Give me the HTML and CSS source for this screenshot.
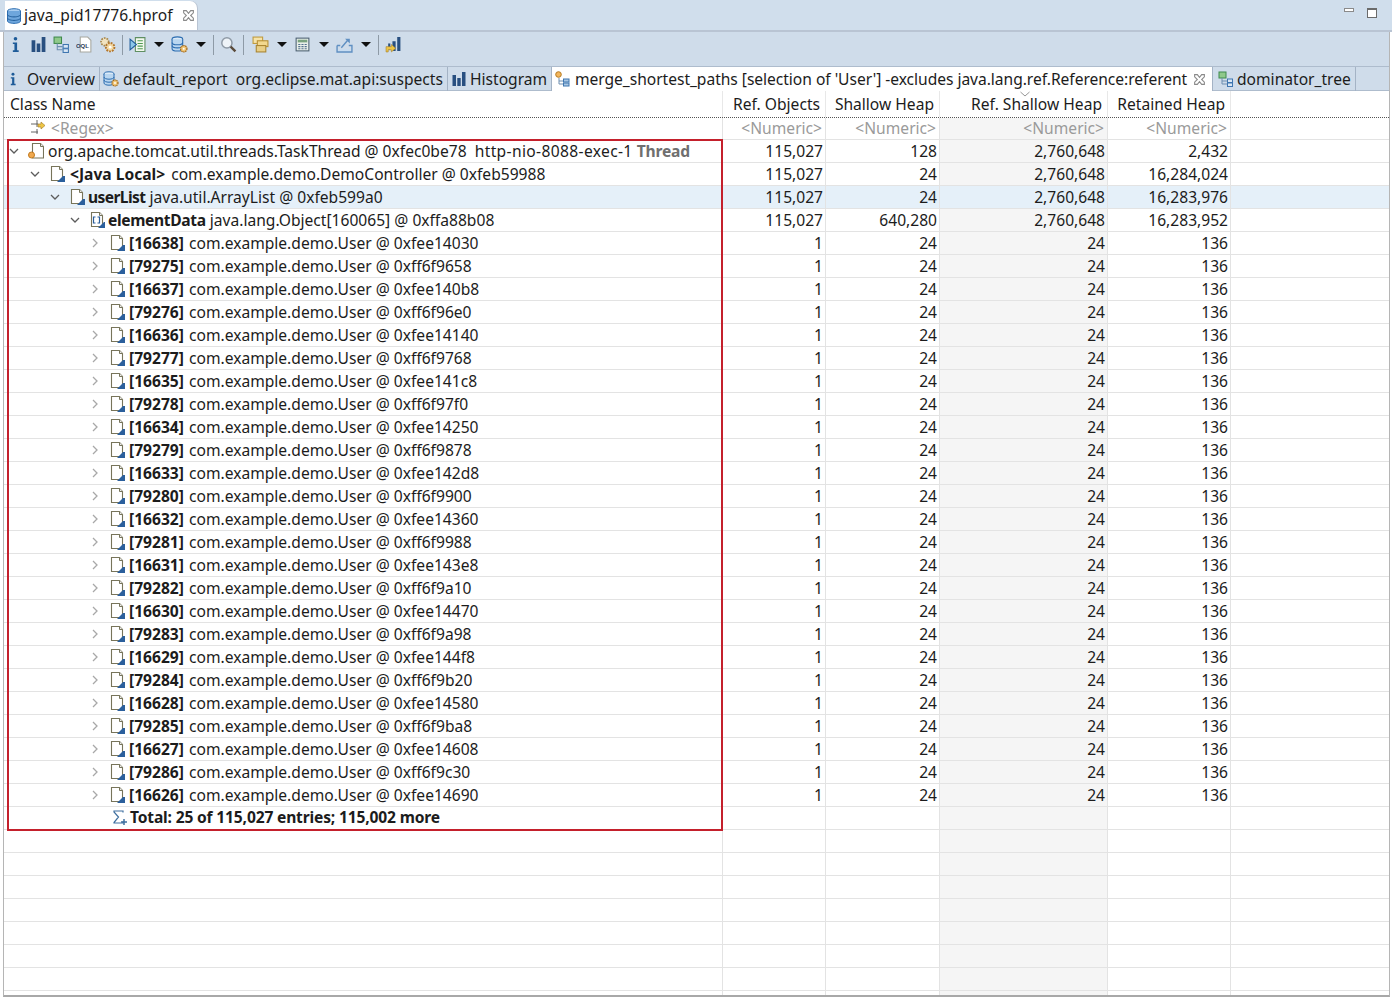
FILE: index.html
```html
<!DOCTYPE html>
<html lang="en">
<head>
<meta charset="utf-8">
<title>java_pid17776.hprof</title>
<link rel="stylesheet" href="styles.css">
</head>
<body>
<svg class="defs" width="0" height="0" aria-hidden="true">
  <defs>
    <symbol id="i-info" viewBox="0 0 16 16"><circle cx="8" cy="2.600" r="1.700" fill="#1f5c99"/><path d="M5.500 6h4v7.500h1.500V15H5.500v-1.500H7V7.500H5.500z" fill="#1f5c99"/></symbol>
    <symbol id="i-hist" viewBox="0 0 16 16"><path d="M1.500 4h3.500v11H1.500zM6.300 7h3.400v8H6.300zM11 1h3.500v14H11z" fill="#284f80"/></symbol>
    <symbol id="i-tree" viewBox="0 0 16 16"><rect x="1" y="1" width="7" height="6" fill="#8fc98a" stroke="#3f8a4c"/><path d="M4 7v6h5M4 10h5" fill="none" stroke="#6f8fb0"/><rect x="9.500" y="8" width="5" height="3.500" fill="#dbe8f5" stroke="#3f76b0"/><rect x="9.500" y="12" width="5" height="3.500" fill="#dbe8f5" stroke="#3f76b0"/></symbol>
    <symbol id="i-oql" viewBox="0 0 16 16"><path d="M4 1h7l3 3v11H4z" fill="#fff" stroke="#a8a8a0"/><text x="0" y="11.500" class="oql-text">OQL</text></symbol>
    <symbol id="i-gears" viewBox="0 0 16 16"><circle cx="5.500" cy="5.500" r="3.600" fill="#f1e3c0" stroke="#a5854a" stroke-width="1.600" stroke-dasharray="1.600 1"/><circle cx="10.500" cy="10.500" r="4" fill="#f3d9a4" stroke="#b3762e" stroke-width="1.800" stroke-dasharray="1.700 1"/><circle cx="10.500" cy="10.500" r="1.300" fill="#fff"/></symbol>
    <symbol id="i-list" viewBox="0 0 16 16"><path d="M6 1.500h9v13H6z" fill="#f2f8ee" stroke="#5f8f62"/><path d="M8 4.500h5M8 7h5M8 9.500h5M8 12h5" stroke="#4f9a52"/><path d="M1 3l6 5-6 5z" fill="#8cc7e8" stroke="#1f5c99"/></symbol>
    <symbol id="i-db" viewBox="0 0 16 16"><ellipse cx="6" cy="3" rx="5" ry="2.200" fill="#dbeaf8" stroke="#2c6db0"/><path d="M1 3v9c0 1.300 2.200 2.200 5 2.200s5-.9 5-2.200V3" fill="#b9d6f0" stroke="#2c6db0"/><path d="M1 6c0 1.300 2.200 2.200 5 2.200s5-.9 5-2.200M1 9c0 1.300 2.200 2.200 5 2.200s5-.9 5-2.200" fill="none" stroke="#2c6db0"/><circle cx="12" cy="12" r="3" fill="#f2c777" stroke="#a46a1c" stroke-width="1.200" stroke-dasharray="1.300 .6"/><circle cx="12" cy="12" r=".9" fill="#fff"/></symbol>
    <symbol id="i-dbplain" viewBox="0 0 16 16"><ellipse cx="8" cy="3" rx="6.500" ry="2.300" fill="#a9cdf0" stroke="#2c6db0"/><path d="M1.500 3v10c0 1.300 2.900 2.400 6.500 2.400s6.500-1.100 6.500-2.400V3" fill="#6ea6dc" stroke="#2c6db0"/><path d="M1.500 6.500c0 1.300 2.900 2.400 6.500 2.400s6.500-1.100 6.500-2.400M1.500 10c0 1.300 2.900 2.400 6.500 2.400s6.500-1.100 6.500-2.400" fill="none" stroke="#1f5c99"/></symbol>
    <symbol id="i-search" viewBox="0 0 16 16"><circle cx="6.500" cy="6.500" r="4.800" fill="#eef3f8" stroke="#8f9aa6" stroke-width="1.400"/><path d="M10 10l4.500 4.500" stroke="#5a4a3a" stroke-width="2.200"/></symbol>
    <symbol id="i-folders" viewBox="0 0 16 16"><rect x="1" y="1" width="9" height="6" fill="#f6e3a8" stroke="#c09a3c"/><rect x="5" y="4.500" width="10" height="5.500" fill="#f2d88f" stroke="#b78f32"/><rect x="4" y="9" width="9" height="6" fill="#e9cf86" stroke="#a98530"/></symbol>
    <symbol id="i-calc" viewBox="0 0 16 16"><rect x="2" y="2" width="12" height="12" fill="#e9efe9" stroke="#4d6072"/><rect x="3.500" y="3.500" width="9" height="2.500" fill="#7aa37f"/><path d="M4 8h2M7 8h2M10 8h2M4 10h2M7 10h2M10 10h2M4 12h2M7 12h2M10 12h2" stroke="#54718f"/></symbol>
    <symbol id="i-export" viewBox="0 0 16 16"><path d="M1 9v6h14V9h-3M4 9H1" fill="none" stroke="#5f8fc2" stroke-width="1.300"/><path d="M2.500 12.500h11V14h-11z" fill="#c6dcf2"/><path d="M5 11l6-7" stroke="#5f8fc2" stroke-width="1.300"/><path d="M8.500 2.500H13V7z" fill="#5f8fc2"/></symbol>
    <symbol id="i-heap" viewBox="0 0 16 16"><path d="M7 5h3v9H7zM11.500 1h3v13h-3z" fill="#284f80"/><path d="M3 7h2v6H3z" fill="#284f80"/><path d="M1 10h5v-2l4 3.500-4 3.500v-2H3v2H1z" fill="#eec544" stroke="#a98530" stroke-width=".6"/></symbol>
    <symbol id="i-merge" viewBox="0 0 16 16"><circle cx="3.500" cy="3.500" r="2.800" fill="#f3b65c" stroke="#b57a22"/><path d="M4 7v6h4M4 10h4" fill="none" stroke="#6f8fb0"/><rect x="8.500" y="8" width="5.500" height="3" fill="#a9c7e4" stroke="#3f76b0"/><rect x="8.500" y="12" width="5.500" height="3" fill="#a9c7e4" stroke="#3f76b0"/></symbol>
    <symbol id="i-close" viewBox="0 0 12 12"><path d="M1.500 1.500L4 1.500 6 4 8 1.500 10.500 1.500 10.500 3.500 8 6 10.500 8.500 10.500 10.500 8 10.500 6 8 4 10.500 1.500 10.500 1.500 8.500 4 6 1.500 3.500z" fill="#fff" stroke="#8a8a8a"/></symbol>
    <symbol id="i-page" viewBox="0 0 16 16"><path d="M2.500 .5h8l3 3V14.500h-11z" fill="#fff" stroke="#77745a" stroke-width="1.100"/><path d="M10.500 .5v3h3" fill="#eee" stroke="#77745a"/><path d="M8 16l6-6h2v6z" fill="#2b5f9c"/></symbol>
    <symbol id="i-thread" viewBox="0 0 16 16"><path d="M4.500 .5h8l3 3V15h-11z" fill="#fff" stroke="#77745a" stroke-width="1.100"/><path d="M12.500 .5v3h3" fill="#eee" stroke="#77745a"/><circle cx="3.500" cy="12" r="3" fill="#f0a94f" stroke="#c27a1e"/></symbol>
    <symbol id="i-array" viewBox="0 0 16 16"><path d="M2.500 .5h8l3 3V14.500h-11z" fill="#fff" stroke="#77745a" stroke-width="1.100"/><path d="M10.500 .5v3h3" fill="#eee" stroke="#77745a"/><path d="M6.500 5h-2v6h2M8.500 5h2v6h-2" fill="none" stroke="#2b5f9c" stroke-width="1.200"/><path d="M9 16l6-6h1v6z" fill="#2b5f9c"/></symbol>
    <symbol id="i-sum" viewBox="0 0 16 16"><path d="M11 2.500V1H2v1l4.500 5L2 12.500V13h9v-1.500" fill="none" stroke="#3f6f9f" stroke-width="1.200"/><path d="M12 9v6M9 12h6" stroke="#3f6f9f" stroke-width="1.500"/></symbol>
    <symbol id="i-regex" viewBox="0 0 16 16"><path d="M1 5h7M7 1v7M1 13h7M7 10v5" fill="none" stroke="#555" stroke-width=".9"/><path d="M8 5h3V3l4 3.500L11 10V8H8z" fill="#eec544" stroke="#a98530" stroke-width=".7"/></symbol>
    <symbol id="i-down" viewBox="0 0 10 10"><path d="M1 3l4 4 4-4" fill="none" stroke="#5c5c5c" stroke-width="1.300"/></symbol>
    <symbol id="i-sort" viewBox="0 0 10 10"><path d="M.5 2l4.500 4 4.500-4" fill="none" stroke="#8a8a8a" stroke-width=".9"/></symbol>
    <symbol id="i-right" viewBox="0 0 10 10"><path d="M3 1l4 4-4 4" fill="none" stroke="#a8a8a8" stroke-width="1.300"/></symbol>
  </defs>
</svg>

<div class="window">
  <div class="editor-bar">
    <div class="editor-tab">
      <svg class="ico"><use href="#i-dbplain"/></svg>
      <span class="editor-title">java_pid17776.hprof</span>
      <svg class="close"><use href="#i-close"/></svg>
    </div>
    <div class="win-buttons"><span class="win-min"></span><span class="win-max"></span></div>
  </div>

  <div class="toolbar">
    <span class="tb"><svg class="ico"><use href="#i-info"/></svg></span>
    <span class="tb"><svg class="ico"><use href="#i-hist"/></svg></span>
    <span class="tb"><svg class="ico"><use href="#i-tree"/></svg></span>
    <span class="tb"><svg class="ico"><use href="#i-oql"/></svg></span>
    <span class="tb"><svg class="ico"><use href="#i-gears"/></svg></span>
    <span class="sep"></span>
    <span class="tb"><svg class="ico"><use href="#i-list"/></svg></span><span class="caret"></span>
    <span class="tb"><svg class="ico"><use href="#i-db"/></svg></span><span class="caret"></span>
    <span class="sep"></span>
    <span class="tb"><svg class="ico"><use href="#i-search"/></svg></span>
    <span class="sep sep-wide"></span>
    <span class="tb"><svg class="ico"><use href="#i-folders"/></svg></span><span class="caret"></span>
    <span class="tb"><svg class="ico"><use href="#i-calc"/></svg></span><span class="caret"></span>
    <span class="tb"><svg class="ico"><use href="#i-export"/></svg></span><span class="caret"></span>
    <span class="sep"></span>
    <span class="tb"><svg class="ico"><use href="#i-heap"/></svg></span>
  </div>

  <div class="subtabs">
    <div class="subtab st-overview"><svg class="ico-sm"><use href="#i-info"/></svg><span>Overview</span></div>
    <div class="subtab st-report"><svg class="ico"><use href="#i-db"/></svg><span>default_report&nbsp; org.eclipse.mat.api:suspects</span></div>
    <div class="subtab st-hist"><svg class="ico"><use href="#i-hist"/></svg><span>Histogram</span></div>
    <div class="subtab active"><svg class="ico"><use href="#i-merge"/></svg><span class="long-title">merge_shortest_paths [selection of 'User'] -excludes java.lang.ref.Reference:referent</span><svg class="close"><use href="#i-close"/></svg></div>
    <div class="subtab st-dom"><svg class="ico"><use href="#i-tree"/></svg><span>dominator_tree</span></div>
  </div>

  <div class="table">
    <div class="row head">
      <div class="c name">Class Name</div>
      <div class="c">Ref. Objects</div>
      <div class="c">Shallow Heap</div>
      <div class="c">Ref. Shallow Heap<svg class="sort"><use href="#i-sort"/></svg></div>
      <div class="c">Retained Heap</div>
      <div class="c rest"></div>
    </div>
    <div class="row filter">
      <div class="c name"><svg class="ico regex"><use href="#i-regex"/></svg>&lt;Regex&gt;</div>
      <div class="c">&lt;Numeric&gt;</div>
      <div class="c">&lt;Numeric&gt;</div>
      <div class="c shade">&lt;Numeric&gt;</div>
      <div class="c">&lt;Numeric&gt;</div>
      <div class="c rest"></div>
    </div>

    <div class="row"><div class="c name l0"><svg class="tw"><use href="#i-down"/></svg><svg class="ico"><use href="#i-thread"/></svg><span class="t">org.apache.tomcat.util.threads.TaskThread @ 0xfec0be78&nbsp; <span class="thread-name">http-nio-8088-exec-1</span> <b class="g">Thread</b></span></div><div class="c">115,027</div><div class="c">128</div><div class="c shade">2,760,648</div><div class="c">2,432</div><div class="c rest"></div></div>
    <div class="row"><div class="c name l1"><svg class="tw"><use href="#i-down"/></svg><svg class="ico"><use href="#i-page"/></svg><span class="t"><b>&lt;Java Local&gt;</b> com.example.demo.DemoController @ 0xfeb59988</span></div><div class="c">115,027</div><div class="c">24</div><div class="c shade">2,760,648</div><div class="c">16,284,024</div><div class="c rest"></div></div>
    <div class="row sel"><div class="c name l2"><svg class="tw"><use href="#i-down"/></svg><svg class="ico"><use href="#i-page"/></svg><span class="t"><b>userList</b> java.util.ArrayList @ 0xfeb599a0</span></div><div class="c">115,027</div><div class="c">24</div><div class="c shade">2,760,648</div><div class="c">16,283,976</div><div class="c rest"></div></div>
    <div class="row"><div class="c name l3"><svg class="tw"><use href="#i-down"/></svg><svg class="ico"><use href="#i-array"/></svg><span class="t"><b>elementData</b> java.lang.Object[160065] @ 0xffa88b08</span></div><div class="c">115,027</div><div class="c">640,280</div><div class="c shade">2,760,648</div><div class="c">16,283,952</div><div class="c rest"></div></div>

    <div class="row"><div class="c name l4"><svg class="tw"><use href="#i-right"/></svg><svg class="ico"><use href="#i-page"/></svg><span class="t"><b>[16638]</b> com.example.demo.User @ 0xfee14030</span></div><div class="c">1</div><div class="c">24</div><div class="c shade">24</div><div class="c">136</div><div class="c rest"></div></div>
    <div class="row"><div class="c name l4"><svg class="tw"><use href="#i-right"/></svg><svg class="ico"><use href="#i-page"/></svg><span class="t"><b>[79275]</b> com.example.demo.User @ 0xff6f9658</span></div><div class="c">1</div><div class="c">24</div><div class="c shade">24</div><div class="c">136</div><div class="c rest"></div></div>
    <div class="row"><div class="c name l4"><svg class="tw"><use href="#i-right"/></svg><svg class="ico"><use href="#i-page"/></svg><span class="t"><b>[16637]</b> com.example.demo.User @ 0xfee140b8</span></div><div class="c">1</div><div class="c">24</div><div class="c shade">24</div><div class="c">136</div><div class="c rest"></div></div>
    <div class="row"><div class="c name l4"><svg class="tw"><use href="#i-right"/></svg><svg class="ico"><use href="#i-page"/></svg><span class="t"><b>[79276]</b> com.example.demo.User @ 0xff6f96e0</span></div><div class="c">1</div><div class="c">24</div><div class="c shade">24</div><div class="c">136</div><div class="c rest"></div></div>
    <div class="row"><div class="c name l4"><svg class="tw"><use href="#i-right"/></svg><svg class="ico"><use href="#i-page"/></svg><span class="t"><b>[16636]</b> com.example.demo.User @ 0xfee14140</span></div><div class="c">1</div><div class="c">24</div><div class="c shade">24</div><div class="c">136</div><div class="c rest"></div></div>
    <div class="row"><div class="c name l4"><svg class="tw"><use href="#i-right"/></svg><svg class="ico"><use href="#i-page"/></svg><span class="t"><b>[79277]</b> com.example.demo.User @ 0xff6f9768</span></div><div class="c">1</div><div class="c">24</div><div class="c shade">24</div><div class="c">136</div><div class="c rest"></div></div>
    <div class="row"><div class="c name l4"><svg class="tw"><use href="#i-right"/></svg><svg class="ico"><use href="#i-page"/></svg><span class="t"><b>[16635]</b> com.example.demo.User @ 0xfee141c8</span></div><div class="c">1</div><div class="c">24</div><div class="c shade">24</div><div class="c">136</div><div class="c rest"></div></div>
    <div class="row"><div class="c name l4"><svg class="tw"><use href="#i-right"/></svg><svg class="ico"><use href="#i-page"/></svg><span class="t"><b>[79278]</b> com.example.demo.User @ 0xff6f97f0</span></div><div class="c">1</div><div class="c">24</div><div class="c shade">24</div><div class="c">136</div><div class="c rest"></div></div>
    <div class="row"><div class="c name l4"><svg class="tw"><use href="#i-right"/></svg><svg class="ico"><use href="#i-page"/></svg><span class="t"><b>[16634]</b> com.example.demo.User @ 0xfee14250</span></div><div class="c">1</div><div class="c">24</div><div class="c shade">24</div><div class="c">136</div><div class="c rest"></div></div>
    <div class="row"><div class="c name l4"><svg class="tw"><use href="#i-right"/></svg><svg class="ico"><use href="#i-page"/></svg><span class="t"><b>[79279]</b> com.example.demo.User @ 0xff6f9878</span></div><div class="c">1</div><div class="c">24</div><div class="c shade">24</div><div class="c">136</div><div class="c rest"></div></div>
    <div class="row"><div class="c name l4"><svg class="tw"><use href="#i-right"/></svg><svg class="ico"><use href="#i-page"/></svg><span class="t"><b>[16633]</b> com.example.demo.User @ 0xfee142d8</span></div><div class="c">1</div><div class="c">24</div><div class="c shade">24</div><div class="c">136</div><div class="c rest"></div></div>
    <div class="row"><div class="c name l4"><svg class="tw"><use href="#i-right"/></svg><svg class="ico"><use href="#i-page"/></svg><span class="t"><b>[79280]</b> com.example.demo.User @ 0xff6f9900</span></div><div class="c">1</div><div class="c">24</div><div class="c shade">24</div><div class="c">136</div><div class="c rest"></div></div>
    <div class="row"><div class="c name l4"><svg class="tw"><use href="#i-right"/></svg><svg class="ico"><use href="#i-page"/></svg><span class="t"><b>[16632]</b> com.example.demo.User @ 0xfee14360</span></div><div class="c">1</div><div class="c">24</div><div class="c shade">24</div><div class="c">136</div><div class="c rest"></div></div>
    <div class="row"><div class="c name l4"><svg class="tw"><use href="#i-right"/></svg><svg class="ico"><use href="#i-page"/></svg><span class="t"><b>[79281]</b> com.example.demo.User @ 0xff6f9988</span></div><div class="c">1</div><div class="c">24</div><div class="c shade">24</div><div class="c">136</div><div class="c rest"></div></div>
    <div class="row"><div class="c name l4"><svg class="tw"><use href="#i-right"/></svg><svg class="ico"><use href="#i-page"/></svg><span class="t"><b>[16631]</b> com.example.demo.User @ 0xfee143e8</span></div><div class="c">1</div><div class="c">24</div><div class="c shade">24</div><div class="c">136</div><div class="c rest"></div></div>
    <div class="row"><div class="c name l4"><svg class="tw"><use href="#i-right"/></svg><svg class="ico"><use href="#i-page"/></svg><span class="t"><b>[79282]</b> com.example.demo.User @ 0xff6f9a10</span></div><div class="c">1</div><div class="c">24</div><div class="c shade">24</div><div class="c">136</div><div class="c rest"></div></div>
    <div class="row"><div class="c name l4"><svg class="tw"><use href="#i-right"/></svg><svg class="ico"><use href="#i-page"/></svg><span class="t"><b>[16630]</b> com.example.demo.User @ 0xfee14470</span></div><div class="c">1</div><div class="c">24</div><div class="c shade">24</div><div class="c">136</div><div class="c rest"></div></div>
    <div class="row"><div class="c name l4"><svg class="tw"><use href="#i-right"/></svg><svg class="ico"><use href="#i-page"/></svg><span class="t"><b>[79283]</b> com.example.demo.User @ 0xff6f9a98</span></div><div class="c">1</div><div class="c">24</div><div class="c shade">24</div><div class="c">136</div><div class="c rest"></div></div>
    <div class="row"><div class="c name l4"><svg class="tw"><use href="#i-right"/></svg><svg class="ico"><use href="#i-page"/></svg><span class="t"><b>[16629]</b> com.example.demo.User @ 0xfee144f8</span></div><div class="c">1</div><div class="c">24</div><div class="c shade">24</div><div class="c">136</div><div class="c rest"></div></div>
    <div class="row"><div class="c name l4"><svg class="tw"><use href="#i-right"/></svg><svg class="ico"><use href="#i-page"/></svg><span class="t"><b>[79284]</b> com.example.demo.User @ 0xff6f9b20</span></div><div class="c">1</div><div class="c">24</div><div class="c shade">24</div><div class="c">136</div><div class="c rest"></div></div>
    <div class="row"><div class="c name l4"><svg class="tw"><use href="#i-right"/></svg><svg class="ico"><use href="#i-page"/></svg><span class="t"><b>[16628]</b> com.example.demo.User @ 0xfee14580</span></div><div class="c">1</div><div class="c">24</div><div class="c shade">24</div><div class="c">136</div><div class="c rest"></div></div>
    <div class="row"><div class="c name l4"><svg class="tw"><use href="#i-right"/></svg><svg class="ico"><use href="#i-page"/></svg><span class="t"><b>[79285]</b> com.example.demo.User @ 0xff6f9ba8</span></div><div class="c">1</div><div class="c">24</div><div class="c shade">24</div><div class="c">136</div><div class="c rest"></div></div>
    <div class="row"><div class="c name l4"><svg class="tw"><use href="#i-right"/></svg><svg class="ico"><use href="#i-page"/></svg><span class="t"><b>[16627]</b> com.example.demo.User @ 0xfee14608</span></div><div class="c">1</div><div class="c">24</div><div class="c shade">24</div><div class="c">136</div><div class="c rest"></div></div>
    <div class="row"><div class="c name l4"><svg class="tw"><use href="#i-right"/></svg><svg class="ico"><use href="#i-page"/></svg><span class="t"><b>[79286]</b> com.example.demo.User @ 0xff6f9c30</span></div><div class="c">1</div><div class="c">24</div><div class="c shade">24</div><div class="c">136</div><div class="c rest"></div></div>
    <div class="row"><div class="c name l4"><svg class="tw"><use href="#i-right"/></svg><svg class="ico"><use href="#i-page"/></svg><span class="t"><b>[16626]</b> com.example.demo.User @ 0xfee14690</span></div><div class="c">1</div><div class="c">24</div><div class="c shade">24</div><div class="c">136</div><div class="c rest"></div></div>

    <div class="row"><div class="c name total"><svg class="ico"><use href="#i-sum"/></svg><span class="t"><b>Total: 25 of 115,027 entries; 115,002 more</b></span></div><div class="c"></div><div class="c"></div><div class="c shade"></div><div class="c"></div><div class="c rest"></div></div>

    <div class="row"><div class="c name"></div><div class="c"></div><div class="c"></div><div class="c shade"></div><div class="c"></div><div class="c rest"></div></div>
    <div class="row"><div class="c name"></div><div class="c"></div><div class="c"></div><div class="c shade"></div><div class="c"></div><div class="c rest"></div></div>
    <div class="row"><div class="c name"></div><div class="c"></div><div class="c"></div><div class="c shade"></div><div class="c"></div><div class="c rest"></div></div>
    <div class="row"><div class="c name"></div><div class="c"></div><div class="c"></div><div class="c shade"></div><div class="c"></div><div class="c rest"></div></div>
    <div class="row"><div class="c name"></div><div class="c"></div><div class="c"></div><div class="c shade"></div><div class="c"></div><div class="c rest"></div></div>
    <div class="row"><div class="c name"></div><div class="c"></div><div class="c"></div><div class="c shade"></div><div class="c"></div><div class="c rest"></div></div>
    <div class="row"><div class="c name"></div><div class="c"></div><div class="c"></div><div class="c shade"></div><div class="c"></div><div class="c rest"></div></div>
    <div class="row"><div class="c name"></div><div class="c"></div><div class="c"></div><div class="c shade"></div><div class="c"></div><div class="c rest"></div></div>

    <div class="annotation"></div>
  </div>
</div>
</body>
</html>
```

FILE: styles.css
```css
* { box-sizing: border-box; }
html, body { margin: 0; padding: 0; height: 1000px; overflow: hidden; background: #fff; }
body { font-family: "Noto Sans", "Liberation Sans", sans-serif; font-size: 15.6px; color: #1c1c1c; }
.defs { position: absolute; }
svg { display: block; flex: none; }
.ico { width: 16px; height: 16px; }
.ico-sm { width: 14px; height: 14px; }
.close { width: 13px; height: 13px; }
.oql-text { font: 700 5.600px "Liberation Sans", sans-serif; fill: #2c3e58; }

.window { height: 997px; margin: 0 2px 0 3px; display: flex; flex-direction: column; border-left: 1px solid #b5b5b5; border-right: 1px solid #b5b5b5; border-bottom: 2px solid #a8a8a8; }

.editor-bar { height: 32px; margin-left: -4px; margin-right: -3px; padding-left: 5px; padding-top: 1px; background: #d0deec; border-bottom: 2px solid #b9c4d3; display: flex; justify-content: space-between; flex: none; }
.editor-tab { width: 192px; height: 29px; background: #fff; border-radius: 0 7px 0 0; display: flex; align-items: center; padding: 0 0 0 1px; gap: 2px; box-shadow: 1px 0 0 #b9c4d3; }
.editor-title { line-height: 29px; width: 156px; white-space: nowrap; }
.win-buttons { display: flex; gap: 13px; padding: 7px 15px 0 0; align-items: flex-start; }
.win-min { width: 10px; height: 4px; background: #fff; border: 1px solid #8a8a8a; }
.win-max { width: 10px; height: 10px; background: #fff; border: 1px solid #6b6b6b; border-top-width: 2px; }

.toolbar { height: 34px; background: #cfdcea; display: flex; align-items: center; flex: none; padding-bottom: 9px; }
.toolbar .ico { width: 17px; height: 17px; }
.tb { width: 23px; height: 23px; display: flex; align-items: center; justify-content: center; flex: none; }
.caret { width: 19px; height: 23px; display: flex; align-items: center; justify-content: center; flex: none; }
.caret::after { content: ""; border-left: 5px solid transparent; border-right: 5px solid transparent; border-top: 5px solid #111; }
.sep { width: 1px; height: 20px; background: #8e9aa6; margin: 0 3px; flex: none; }
.sep-wide { margin-right: 5px; }

.subtabs { height: 25px; background: #cfdcea; border-top: 1px solid #aebccd; border-bottom: 1px solid #aebccd; display: flex; flex: none; }
.subtab { height: 24px; display: flex; align-items: center; gap: 3px; white-space: nowrap; border-right: 1px solid #a4b3c5; padding-left: 1px; flex: none; }
.st-overview { width: 96px; padding-left: 2px; gap: 7px; }
.st-report { width: 348px; padding-left: 3px; gap: 4px; }
.st-hist { width: 104px; padding-left: 3px; }
.subtab.active { width: 661px; background: #fff; height: 24px; padding-left: 3px; gap: 4px; border-right: 1px solid #a4b3c5; }
.subtab.active .close { margin-left: 2px; }
.long-title { letter-spacing: -.035px; }
.st-dom { width: 143px; padding-left: 5px; }

.table { flex: 1; position: relative; overflow: hidden; min-height: 0; }
.row { display: grid; grid-template-columns: 719px 103px 114px 168px 123px 1fr; height: 23px; border-bottom: 1px solid #e3e3e3; }
.c { border-right: 1px solid #e3e3e3; text-align: right; padding-right: 2px; line-height: 22px; height: 22px; white-space: nowrap; position: relative; }
.c.rest { border-right: 0; }
.c.name { text-align: left; padding: 0; display: flex; align-items: center; }
.c.shade { background: #f5f5f5; }
.row.sel { background: #e5f0f9; }
.row.sel .c.shade { background: #e5f0f9; }
.t { line-height: 22px; }
.t b { font-weight: 700; }
.t b.g { color: #6f6f6f; letter-spacing: -.2px; }
.thread-name { letter-spacing: .35px; }
.tw { width: 10px; height: 10px; }
.l0 { padding-left: 9px !important; }
.l0 .tw { margin-right: 9px; margin-left: -4px; }
.l0 .t { margin-left: 4px; }
.l1 { padding-left: 26px !important; }
.l2 { padding-left: 46px !important; }
.l3 { padding-left: 66px !important; }
.l4 { padding-left: 86px !important; }
.l1 .tw, .l2 .tw, .l3 .tw, .l4 .tw { margin-right: 9px; }
.l1 .t { margin-left: 5px; }
.l1 b { margin-right: 2px; }
.l2 .t, .l3 .t { margin-left: 3px; }
.l2 b { letter-spacing: -.6px; }
.l3 b { letter-spacing: -.35px; }
.l4 .t { margin-left: 4px; }
.l4 b { margin-right: 1px; }
.total { padding-left: 108px !important; }
.total .t { margin-left: 2px; margin-bottom: 2px; letter-spacing: -.17px; }

.head { height: 26px; border-bottom: 0; }
.head .c { line-height: 26px; height: 26px; padding-right: 5px; border-right-color: #e8e8e8; }
.head .c.name { padding-left: 6px; border-right-color: #e8e8e8; }
.head .c.rest, .filter .c.rest { border-right: 0; }
.sort { position: absolute; width: 10px; height: 10px; left: 80px; top: -1px; }

.filter { height: 23px; border-top: 1px dotted #555; border-bottom: 1px solid #e3e3e3; color: #9a9a9a; }
.filter .c { line-height: 21px; height: 21px; }
.filter .c.name { padding-left: 26px; gap: 5px; }
.filter .c:not(.name):not(.rest) { padding-right: 3px; }
.regex { margin-top: -3px; }

.annotation { position: absolute; left: 3px; top: 48px; width: 716px; height: 692px; border: 2px solid #c4202c; pointer-events: none; }
```
